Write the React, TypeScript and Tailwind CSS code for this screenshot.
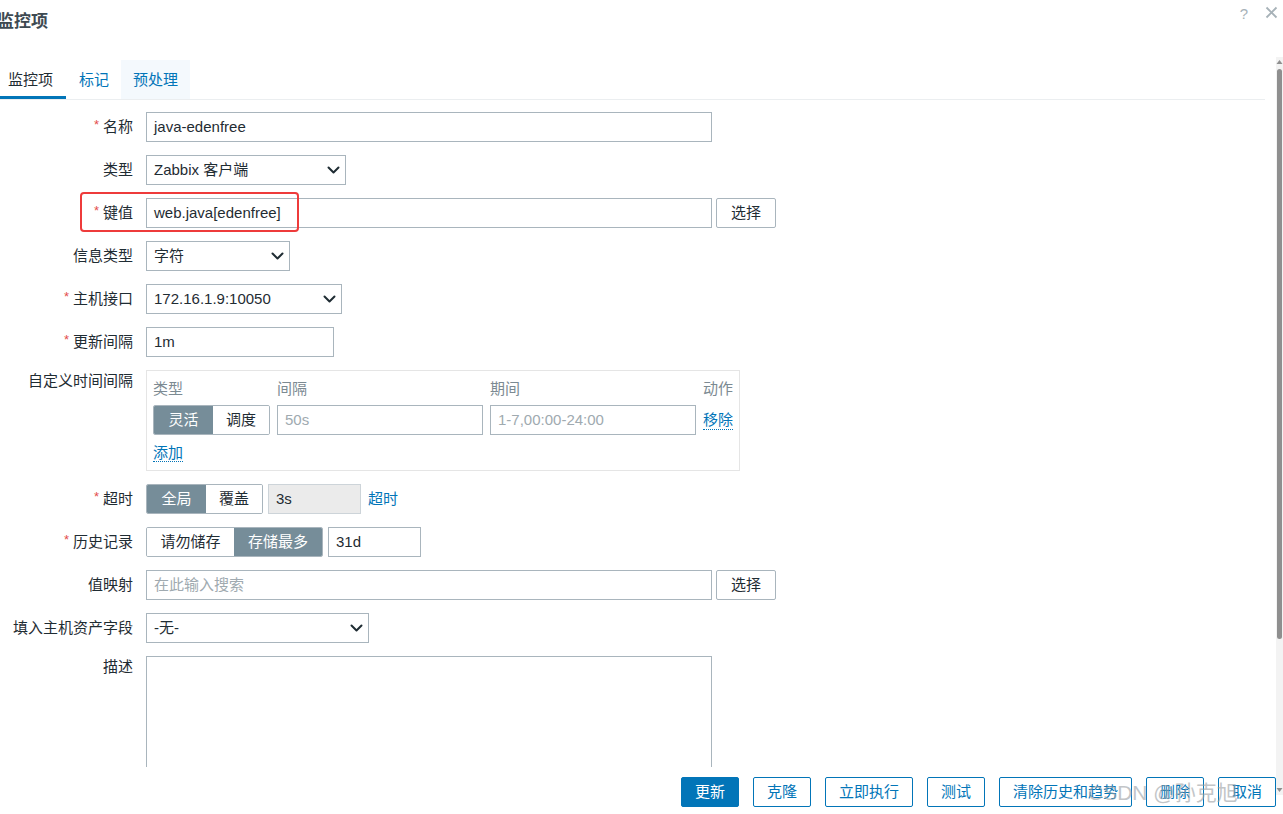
import React from 'react';

const font = { fontFamily: '"Liberation Sans", Arial, "Noto Sans CJK SC", sans-serif' };

function Chevron() {
  return (
    <svg width="13" height="8" viewBox="0 0 13 8" className="shrink-0">
      <path d="M1.5 1.5l5 5 5-5" fill="none" stroke="#1f2c33" strokeWidth="2" strokeLinecap="round" strokeLinejoin="round" />
    </svg>
  );
}

function Label({ text, required, top }: { text: string; required?: boolean; top?: boolean }) {
  return (
    <div className={`w-[134px] shrink-0 pr-[1px] flex justify-end ${top ? 'items-start' : 'items-center'} h-[30px] text-[#1f2c33]`}>
      {required && <span className="text-[#e44d4d] text-[13px] mr-[4px] -mt-[4px]">*</span>}
      <span>{text}</span>
    </div>
  );
}

function TextBox({ value, placeholder, w, disabled }: { value?: string; placeholder?: string; w: string; disabled?: boolean }) {
  return (
    <div
      className={`${w} shrink-0 h-[30px] border flex items-center px-[7px] ${
        disabled ? 'bg-[#ebebeb] border-[#cdd4d9] text-[#1f2c33]' : 'bg-white border-[#a9b5bd] text-[#1f2c33]'
      }`}
    >
      {value ? <span>{value}</span> : <span className="text-[#a0aab0]">{placeholder}</span>}
    </div>
  );
}

function Select({ value, w }: { value: string; w: string }) {
  return (
    <div className={`${w} h-[30px] border border-[#a9b5bd] bg-white flex items-center justify-between pl-[7px] pr-[5px] text-[#1f2c33]`}>
      <span>{value}</span>
      <Chevron />
    </div>
  );
}

function Seg({ items, active, widths }: { items: string[]; active: number; widths: string[] }) {
  return (
    <div className="flex shrink-0 h-[30px] border border-[#a9b5bd] rounded-[2px] overflow-hidden">
      {items.map((it, i) => (
        <div
          key={it}
          className={`${widths[i]} flex items-center justify-center ${
            i === active ? 'bg-[#768d99] text-white' : 'bg-white text-[#1f2c33]'
          }`}
        >
          {it}
        </div>
      ))}
    </div>
  );
}

function PickButton() {
  return (
    <div className="ml-[4px] w-[60px] h-[30px] border border-[#a9b5bd] rounded-[2px] flex items-center justify-center text-[#1f2c33] bg-white">
      选择
    </div>
  );
}

function Row({ children }: { children: React.ReactNode }) {
  return <div className="flex items-start gap-[12px]">{children}</div>;
}

export default function App() {
  return (
    <div className="relative w-[1283px] h-[814px] bg-white overflow-hidden flex flex-col text-[15px]" style={font}>
      {/* header */}
      <div className="h-[60px] shrink-0 relative">
        <div className="pt-[10px] -ml-[3px] text-[17px] font-bold text-[#3e4a52] leading-[24px]">监控项</div>
        <div className="absolute top-[3px] right-[35px] text-[15px] text-[#a7b2b8]">?</div>
        <svg className="absolute top-[6px] right-[5px]" width="13" height="13" viewBox="0 0 13 13">
          <path d="M1.5 1.5l10 10M11.5 1.5l-10 10" stroke="#a7b2b8" strokeWidth="1.8" />
        </svg>
      </div>

      {/* tabs */}
      <div className="h-[40px] shrink-0 flex border-b border-[#ebeef0] mr-[18px]">
        <div className="w-[66px] pl-[8px] flex items-center text-[#1f2c33] border-b-[3px] border-[#0275b8] pt-[4px]">监控项</div>
        <div className="px-[12px] flex items-center text-[#0275b8] ml-[1px] pt-[2px]">标记</div>
        <div className="px-[12px] flex items-center text-[#0275b8] bg-[#f4f9fd] pt-[2px]">预处理</div>
      </div>

      {/* body */}
      <div className="flex-1 overflow-hidden pt-[12px] flex flex-col gap-[13px]">
        <Row>
          <Label text="名称" required />
          <TextBox value="java-edenfree" w="w-[566px]" />
        </Row>
        <Row>
          <Label text="类型" />
          <Select value="Zabbix 客户端" w="w-[200px]" />
        </Row>
        <Row>
          <div className="relative flex gap-[12px]">
            <Label text="键值" required />
            <TextBox value="web.java[edenfree]" w="w-[566px]" />
            <div className="absolute left-[80px] top-[-6px] w-[219px] h-[40px] border-2 border-[#ee3b3b] rounded-[4px]" />
          </div>
          <div className="-ml-[12px]">
            <PickButton />
          </div>
        </Row>
        <Row>
          <Label text="信息类型" />
          <Select value="字符" w="w-[144px]" />
        </Row>
        <Row>
          <Label text="主机接口" required />
          <Select value="172.16.1.9:10050" w="w-[196px]" />
        </Row>
        <Row>
          <Label text="更新间隔" required />
          <TextBox value="1m" w="w-[188px]" />
        </Row>
        <Row>
          <Label text="自定义时间间隔" top />
          <div className="w-[594px] h-[101px] border border-[#e5e5e5] px-[6px] pt-[8px]">
            <div className="flex gap-[7px] text-[#7c8a92] h-[20px] items-center">
              <div className="w-[117px]">类型</div>
              <div className="w-[206px]">间隔</div>
              <div className="w-[206px]">期间</div>
              <div className="whitespace-nowrap">动作</div>
            </div>
            <div className="flex gap-[7px] mt-[6px] items-center">
              <Seg items={['灵活', '调度']} active={0} widths={['w-[59px]', 'w-[56px]']} />
              <TextBox placeholder="50s" w="w-[206px]" />
              <TextBox placeholder="1-7,00:00-24:00" w="w-[206px]" />
              <span className="text-[#0275b8] border-b border-dotted border-[#0275b8] leading-[18px] whitespace-nowrap shrink-0">移除</span>
            </div>
            <div className="mt-[7px]">
              <span className="text-[#0275b8] border-b border-dotted border-[#0275b8] leading-[18px]">添加</span>
            </div>
          </div>
        </Row>
        <Row>
          <Label text="超时" required />
          <div className="flex items-center">
            <Seg items={['全局', '覆盖']} active={0} widths={['w-[59px]', 'w-[56px]']} />
            <div className="ml-[5px]">
              <TextBox value="3s" w="w-[93px]" disabled />
            </div>
            <span className="ml-[7px] text-[#0275b8]">超时</span>
          </div>
        </Row>
        <Row>
          <Label text="历史记录" required />
          <div className="flex items-center">
            <Seg items={['请勿储存', '存储最多']} active={1} widths={['w-[87px]', 'w-[88px]']} />
            <div className="ml-[5px]">
              <TextBox value="31d" w="w-[93px]" />
            </div>
          </div>
        </Row>
        <Row>
          <Label text="值映射" />
          <TextBox placeholder="在此输入搜索" w="w-[566px]" />
          <div className="-ml-[12px]">
            <PickButton />
          </div>
        </Row>
        <Row>
          <Label text="填入主机资产字段" />
          <Select value="-无-" w="w-[223px]" />
        </Row>
        <Row>
          <Label text="描述" top />
          <div className="w-[566px] h-[160px] border border-[#a9b5bd]" />
        </Row>
      </div>

      {/* footer */}
      <div className="h-[47px] shrink-0 pt-[10px] flex justify-end gap-[14px] pr-[7px]">
        <div className="h-[30px] px-[13px] flex items-center bg-[#0275b8] border border-[#0275b8] text-white rounded-[2px]">更新</div>
        {['克隆', '立即执行', '测试', '清除历史和趋势', '删除', '取消'].map((b) => (
          <div key={b} className="h-[30px] px-[13px] flex items-center border border-[#0275b8] text-[#0275b8] rounded-[2px] bg-white">
            {b}
          </div>
        ))}
      </div>

      {/* watermark */}
      <div className="absolute left-[1088px] top-[777px] text-[21px] text-[#9aa0a4] opacity-60 pointer-events-none whitespace-nowrap">
        CSDN @孙克旭
      </div>

      {/* scrollbar */}
      <div className="absolute right-0 top-[57px] w-[7px] h-[738px] bg-[#f3f3f3] flex flex-col items-center">
        <svg width="7" height="6" viewBox="0 0 7 6" className="mt-[2px]">
          <path d="M3.5 1L6.5 5H0.5Z" fill="#8f8f8f" />
        </svg>
        <div className="mt-[4px] w-[5px] h-[570px] bg-[#8f8f8f] rounded-[3px]" />
        <div className="flex-1" />
        <svg width="7" height="6" viewBox="0 0 7 6" className="mb-[2px]">
          <path d="M3.5 5L6.5 1H0.5Z" fill="#8f8f8f" />
        </svg>
      </div>
    </div>
  );
}
